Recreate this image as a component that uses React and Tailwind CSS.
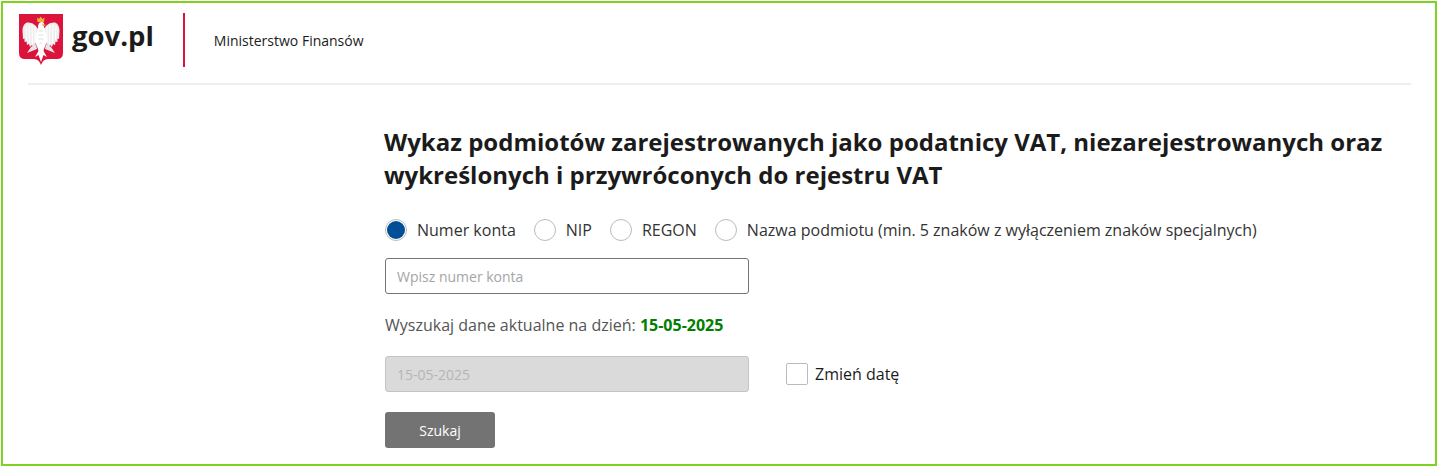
import React from 'react';

const Emblem = () => (
    <svg width="44" height="52" viewBox="0 0 44 52" className="shrink-0">
        <path d="M0 0H44V39Q44 45 38 45H29Q24 45 22 51Q20 45 15 45H6Q0 45 0 39Z" fill="#dc143c" />
        {/* korona */}
        <path d="M18.500 8L18 3.500L20 5L21.500 2.500L23.500 5L25.500 3.500L25 8Z" fill="#e8b23c" />
        {/* skrzydla */}
        <path d="M19 15C17 11 13 8 8 8.500C5 9.500 3.500 13 3.500 17L4 25L5.500 24.500L5.500 28L7.500 27.500L8 31L10 30L11 33L13 31L14 33L17 29L19 22Z" fill="#eeeeee" />
        <path d="M25 15C27 11 31 8 36 8.500C39 9.500 40.500 13 40.500 17L40 25L38.500 24.500L38.500 28L36.500 27.500L36 31L34 30L33 33L31 31L30 33L27 29L25 22Z" fill="#eeeeee" />
        <path d="M7 12L7.500 26M10 10.500L10.500 29M13 10.500L13.500 30M16 13L16 28M37 12L36.500 26M34 10.500L33.500 29M31 10.500L30.500 30M28 13L28 28" stroke="#ffffff" strokeWidth="1" />
        {/* tulow i glowa */}
        <path d="M19 14C19 10 20 8 22.500 8C25 8 25.500 10 25 12.500C26 16 28 21 27.500 28C26.500 32 25 34 24.500 37L28 43L24.500 41L22 48L19.500 41L16 43L19.500 37C19 34 17.500 32 16.500 28C16 21 18.500 17 19 14Z" fill="#ffffff" />
        <path d="M20 17L24 17M19.500 21L24.500 21M19.500 25L24.500 25M20.500 29L23.500 29" stroke="#c9c9c9" strokeWidth="0.6" />
        <path d="M23 9.500L27 11L24 12.500Z" fill="#e8b23c" />
        {/* szpony */}
        <path d="M17 30L12 33L8 39L13 37L18 35Z" fill="#e6e6e6" />
        <path d="M27 30L32 33L36 39L31 37L26 35Z" fill="#e6e6e6" />
    </svg>
);

const Radio = ({ label, checked }) => (
    <label className="flex items-center gap-[10px]">
        <span className="flex h-[22px] w-[22px] items-center justify-center rounded-full border border-[#bbbbbb] bg-white">
            {checked && <span className="h-[18px] w-[18px] rounded-full bg-[#004f96]"></span>}
        </span>
        <span>{label}</span>
    </label>
);

export default function App() {
    return (
        <div className="h-[469px] w-[1440px] overflow-hidden bg-white pt-px pl-px font-['Open_Sans',sans-serif] text-[#1b1b1b]">
            <div className="h-[465px] w-[1436px] border-2 border-[#7ed321]">
                <header className="ml-[16px] flex h-[64px] items-start pt-[10px]">
                    <div className="mt-px"><Emblem /></div>
                    <span className="ml-[9px] mt-[1px] text-[27.500px] leading-[44px] font-bold text-[#1b1b1b]">gov.pl</span>
                    <div className="ml-[29px] h-[54px] w-[2px] bg-[#dc143c]"></div>
                    <span className="ml-[29px] mt-[18px] text-[14px] leading-[20px]">Ministerstwo Finansów</span>
                </header>
                <div className="mt-[16px] ml-[25px] h-[2px] w-[1383px] bg-[#eeeeee]"></div>

                <main className="ml-[381px] pt-[40px]">
                    <h1 className="w-[1020px] text-[24px] leading-[33px] font-bold text-[#1b1b1b]">
                        Wykaz podmiotów zarejestrowanych jako podatnicy VAT, niezarejestrowanych oraz wykreślonych i przywróconych do rejestru VAT
                    </h1>

                    <div className="mt-[27px] ml-px flex h-[24px] items-center gap-[18px] text-[16px] text-[#333333]">
                        <Radio label="Numer konta" checked />
                        <Radio label="NIP" />
                        <Radio label="REGON" />
                        <Radio label="Nazwa podmiotu (min. 5 znaków z wyłączeniem znaków specjalnych)" />
                    </div>

                    <input
                        readOnly
                        placeholder="Wpisz numer konta"
                        className="mt-[16px] ml-px block h-[36px] w-[364px] rounded-[3px] border border-[#757575] bg-white px-[11px] text-[14px] placeholder:text-[#a5a5a5] outline-none"
                    />

                    <p className="mt-[19px] ml-px text-[16px] leading-[24px] text-[#555555]">
                        Wyszukaj dane aktualne na dzień: <b className="text-[#008000]">15-05-2025</b>
                    </p>

                    <div className="mt-[19px] ml-px flex items-center">
                        <div className="flex h-[36px] w-[364px] items-center rounded-[3px] border border-[#c4c4c4] bg-[#dadada] px-[11px] text-[14px] text-[#b5b5b5]">
                            15-05-2025
                        </div>
                        <label className="ml-[37px] flex items-center gap-[7px] text-[16px]">
                            <span className="h-[22px] w-[22px] rounded-[2px] border border-[#bbbbbb] bg-white"></span>
                            Zmień datę
                        </label>
                    </div>

                    <button className="mt-[20px] ml-px block h-[36px] w-[110px] rounded-[3px] bg-[#737373] text-[14px] text-white">
                        Szukaj
                    </button>
                </main>
            </div>
        </div>
    );
}
